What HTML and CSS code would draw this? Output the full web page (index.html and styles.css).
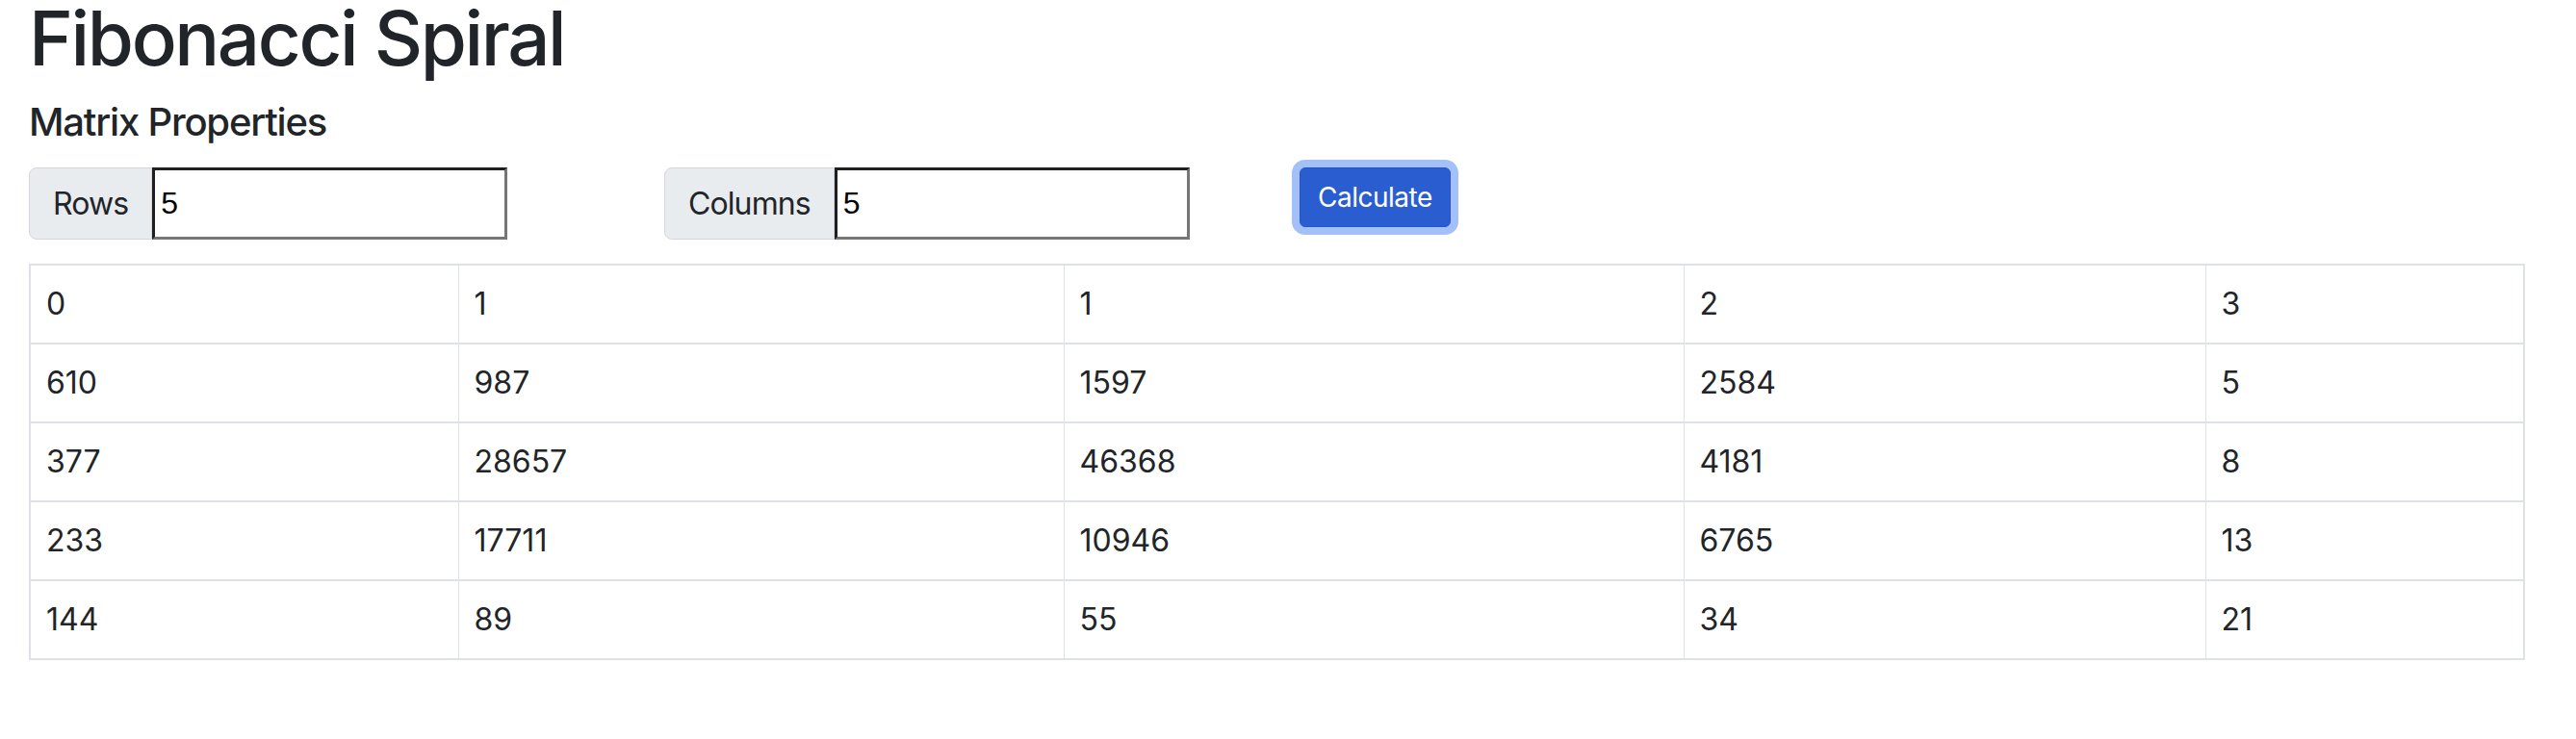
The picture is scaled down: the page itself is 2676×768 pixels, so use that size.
FILE: index.html
```html
<!DOCTYPE html>
<html lang="en">
<head>
<meta charset="utf-8">
<title>Fibonacci Spiral</title>
<link rel="stylesheet" href="styles.css">
</head>
<body>
<main class="page">
  <h1 class="title">Fibonacci Spiral</h1>
  <h2 class="subtitle">Matrix Properties</h2>
  <div class="controls">
    <div class="group">
      <span class="group-label">Rows</span>
      <input class="group-input" type="text" value="5">
    </div>
    <div class="group">
      <span class="group-label">Columns</span>
      <input class="group-input" type="text" value="5">
    </div>
    <div class="action">
      <button class="btn-calc" type="button">Calculate</button>
    </div>
  </div>
  <table class="matrix">
    <colgroup>
      <col class="c1"><col class="c2"><col class="c3"><col class="c4"><col class="c5">
    </colgroup>
    <tbody>
      <tr><td>0</td><td>1</td><td>1</td><td>2</td><td>3</td></tr>
      <tr><td>610</td><td>987</td><td>1597</td><td>2584</td><td>5</td></tr>
      <tr><td>377</td><td>28657</td><td>46368</td><td>4181</td><td>8</td></tr>
      <tr><td>233</td><td>17711</td><td>10946</td><td>6765</td><td>13</td></tr>
      <tr><td>144</td><td>89</td><td>55</td><td>34</td><td>21</td></tr>
    </tbody>
  </table>
</main>
</body>
</html>
```
FILE: styles.css
```css
* { box-sizing: border-box; }
html, body { margin: 0; padding: 0; background: #fff; }
body {
  font-family: Inter, "Noto Sans", sans-serif;
  color: #212529;
}
.page {
  padding: 1px 0 0 30px;
}
.title {
  margin: 0;
  font-size: 78px;
  line-height: 78px;
  font-weight: 500;
  letter-spacing: -2.4px;
}
.subtitle {
  margin: 24px 0 0 0;
  font-size: 40px;
  line-height: 48px;
  font-weight: 500;
  letter-spacing: -1.2px;
}
.controls {
  display: grid;
  grid-template-columns: 660px 660px 660px;
  align-items: start;
  margin-top: 23px;
}
.group {
  display: flex;
  align-items: stretch;
  height: 75px;
}
.group-label {
  display: flex;
  align-items: center;
  padding: 0 24px;
  font-size: 32px;
  letter-spacing: -0.9px;
  background: #e9ecef;
  border: 1px solid #d3d7dc;
  border-radius: 8px 0 0 8px;
}
.group-input {
  width: 369px;
  height: 75px;
  margin: 0;
  padding: 0 6px;
  font-family: "Liberation Sans", Arial, sans-serif;
  font-size: 32px;
  color: #000;
  background: #fff;
  border: 3px solid;
  border-color: #1f1f1f #767676 #767676 #1f1f1f;
  border-radius: 0;
  outline: none;
}
.action {
  display: flex;
}
.btn-calc {
  height: 62px;
  padding: 0 18px;
  font-family: Inter, "Noto Sans", sans-serif;
  font-size: 28px;
  letter-spacing: -0.5px;
  color: #fff;
  background: #2a5dd0;
  border: 1px solid #2556c6;
  border-radius: 6px;
  box-shadow: 0 0 0 8px #a4c0f8;
}
.matrix {
  margin-top: 25px;
  width: 2591px;
  table-layout: fixed;
  border-collapse: collapse;
  border: 2px solid #dee2e6;
  font-size: 32px;
  line-height: 48px;
}
.c1 { width: 445px; }
.c2 { width: 629px; }
.c3 { width: 644px; }
.c4 { width: 542px; }
.c5 { width: 331px; }
.matrix td {
  padding: 16px 16px 16px 16px;
  border-left: 1px solid #dee2e6;
  border-right: 1px solid #dee2e6;
  border-top: 2px solid #dee2e6;
  border-bottom: 2px solid #dee2e6;
}
```
